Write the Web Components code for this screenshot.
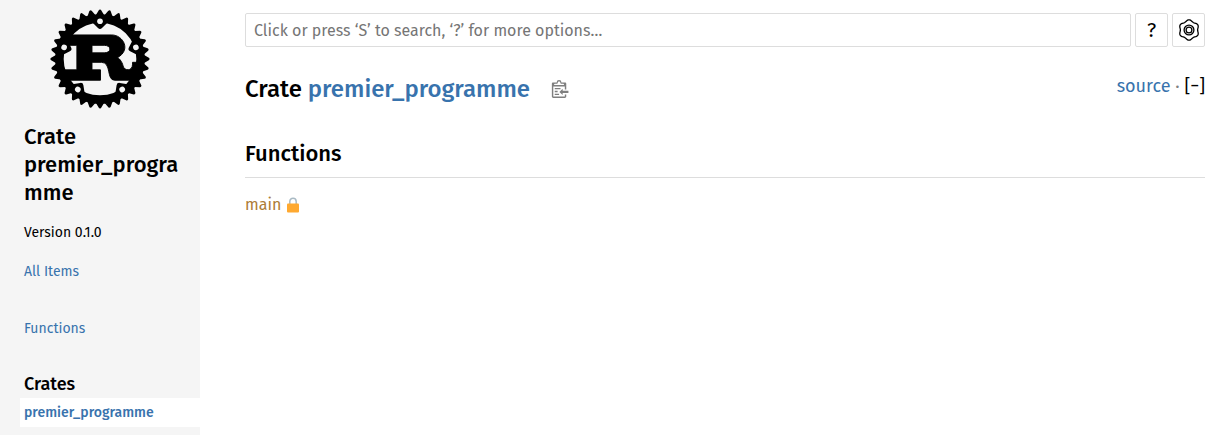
<!DOCTYPE html>
<html lang="en">
<head>
<meta charset="utf-8">
<title>premier_programme - Rust</title>
<style>
html, body { margin: 0; min-height: 100%; }
body { background: #fff; color: #000; font: 16px/24px "Fira Sans", "Noto Sans", sans-serif; --link: #3873ad; --line: #dddddd; }
</style>
</head>
<body>
<doc-page>
  <doc-sidebar slot="sidebar" crate="premier_programme" version="0.1.0"></doc-sidebar>
  <search-bar></search-bar>
  <crate-heading name="premier_programme"></crate-heading>
  <item-section heading="Functions"><item-link href="#main" private>main</item-link></item-section>
</doc-page>
<script>
const define = (name, render) => customElements.define(name, class extends HTMLElement {
  connectedCallback() {
    if (this.shadowRoot) return;
    this.attachShadow({ mode: 'open' }).innerHTML = render(this);
  }
});

define('doc-page', () => `
<style>
:host { display: grid; grid-template-columns: 200px minmax(0, 1fr); min-height: 100vh; }
main { padding: 13px 19px 15px 45px; }
</style>
<slot name="sidebar"></slot>
<main><slot></slot></main>`);

const turned = (markup, count) => Array.from({ length: count }, (_, i) =>
  `<g transform="rotate(${i * 360 / count})">${markup}</g>`).join('');

define('rust-logo', () => `
<style>
:host { display: block; }
svg { display: block; width: 100px; height: 100px; }
</style>
<svg viewBox="0 0 106 106" role="img" aria-label="Rust logo">
  <mask id="holes" maskUnits="userSpaceOnUse" x="-60" y="-60" width="120" height="120">
    <rect x="-60" y="-60" width="120" height="120" fill="white"/>
    ${turned('<circle cy="-40" r="3" fill="black"/>', 5)}
  </mask>
  <g transform="translate(53 53)" stroke="black" stroke-linejoin="round">
    <path transform="translate(.5 .5)" d="M-9-15H4C12-15 12-7 4-7H-9ZM-40 22H0V11H-9V3H1C12 3 6 22 15 22H40V3H34V5C34 13 25 12 24 7C23 2 19-2 18-2C33-10 24-26 12-26H-35V-15H-25V11H-40Z"/>
    <g mask="url(#holes)">
      <circle r="43" fill="none" stroke-width="9"/>
      <g stroke-width="3">${turned('<polygon points="46,3 51,0 46,-3"/>', 32)}</g>
      <g stroke-width="6">${turned('<polygon points="-7,-42 0,-35 7,-42"/>', 5)}</g>
    </g>
  </g>
</svg>`);

define('doc-sidebar', el => `
<style>
:host { display: block; box-sizing: border-box; background: #f5f5f5; padding: 9px 0 8px 24px; font-size: 14px; line-height: 19px; }
rust-logo { padding-left: 26px; }
h2 { margin: 14px 20px 16px 0; font-size: 22px; line-height: 28px; font-weight: 500; overflow-wrap: anywhere; }
ul { list-style: none; margin: 0; padding: 0; }
.version { margin-bottom: 20px; }
.index { margin: 38px 0 36px; }
a { color: var(--link); text-decoration: none; }
h3 { margin: 0 0 4px; font-size: 18px; line-height: 20px; font-weight: 500; }
.current { display: block; margin-left: -4px; padding: 5px 4px; background: #fff; font-weight: 500; }
</style>
<rust-logo></rust-logo>
<h2>Crate ${el.getAttribute('crate')}</h2>
<div class="version">Version ${el.getAttribute('version')}</div>
<a href="#all">All Items</a>
<ul class="index"><li><a href="#functions">Functions</a></li></ul>
<h3>Crates</h3>
<a class="current" href="#crate">${el.getAttribute('crate')}</a>`);

/* Six-lobed wheel outline, as a smooth closed curve. */
const wheel = Array.from({ length: 72 }, (_, i) => {
  const a = i * Math.PI / 36, r = 9.4 + 0.8 * Math.cos(6 * (a - Math.PI / 2));
  return (11 + r * Math.cos(a)).toFixed(2) + ' ' + (11 - r * Math.sin(a)).toFixed(2);
}).join('L');

define('search-bar', () => `
<style>
:host { display: block; }
form { display: grid; grid-template-columns: minmax(0, 1fr) 33px 33px; gap: 4px; height: 34px; }
input, button { box-sizing: border-box; margin: 0; border: 1px solid var(--line); border-radius: 2px; background: #fff; color: #000; font: inherit; }
input { width: 100%; padding: 2px 8px 0; }
input::placeholder { color: #757575; opacity: 1; }
button { display: grid; place-items: center; padding: 0; font-size: 20px; }
svg { display: block; width: 22px; height: 22px; }
</style>
<form role="search">
  <input type="search" aria-label="Search" placeholder="Click or press ‘S’ to search, ‘?’ for more options…">
  <button type="button" title="help">?</button>
  <button type="button" aria-label="Settings">
    <svg viewBox="0 0 22 22" fill="none" stroke="#000" stroke-width="1.3"><path d="M${wheel}Z"/><circle cx="11" cy="11" r="4.9"/><circle cx="11" cy="11" r="2.9"/></svg>
  </button>
</form>`);

define('crate-heading', el => `
<style>
:host { display: flex; justify-content: space-between; align-items: flex-start; margin-top: 24px; }
h1 { display: flex; align-items: center; margin: 0; font-size: 24px; line-height: 36px; font-weight: 500; white-space: pre; }
a { color: var(--link); text-decoration: none; }
button { margin: 0; border: 0; padding: 0; background: none; color: inherit; font: inherit; }
.copy { margin-left: 21px; color: #7f7f7f; }
svg { display: block; width: 19px; height: 18px; }
.tools { font-size: 18px; line-height: 30px; color: #808080; }
.tools button { color: #000; }
</style>
<h1>Crate <a href="#crate">${el.getAttribute('name')}</a><button class="copy" type="button" aria-label="Copy item path"><svg viewBox="0 0 24 25" fill="currentColor"><path d="M18 20h2v3c0 1-1 2-2 2H2c-.998 0-2-1-2-2V5c0-.911.755-1.667 1.667-1.667h5A3.323 3.323 0 0110 0a3.323 3.323 0 013.333 3.333h5C19.245 3.333 20 4.09 20 5v8.333h-2V9H2v14h16v-3zM3 7h14c0-.911-.793-1.667-1.75-1.667H13.5c-.957 0-1.75-.755-1.75-1.666C11.75 2.755 10.957 2 10 2s-1.75.755-1.75 1.667c0 .911-.793 1.666-1.75 1.666H4.75C3.793 5.333 3 6.09 3 7z"/><path d="M4 19h6v2H4zM12 11H4v2h8zM4 17h4v-2H4zM15 15v-3l-4.5 4.5L15 21v-3l8.027-.032L23 15z"/></svg></button></h1>
<div class="tools"><a href="#source">source</a> · <button type="button" title="collapse all docs">[−]</button></div>`);

define('item-section', el => `
<style>
:host { display: block; }
h2 { margin: 33px 0 15px; border-bottom: 1px solid var(--line); padding-bottom: 9px; font-size: 22px; line-height: 28px; font-weight: 500; }
</style>
<h2>${el.getAttribute('heading')}</h2>
<slot></slot>`);

define('item-link', el => `
<style>
:host { display: flex; align-items: center; gap: 6px; }
a { color: #ad7c37; text-decoration: none; }
svg { display: block; width: 12px; height: 16px; }
</style>
<a href="${el.getAttribute('href')}"><slot></slot></a>
${el.hasAttribute('private') ? `<svg viewBox="0 0 12 16" role="img" aria-label="Restricted visibility"><path d="M2.8 8V4.4a3.2 3.2 0 0 1 6.4 0V8" fill="none" stroke="#a9bac4" stroke-width="1.5"/><rect y="6.5" width="12" height="9" rx="1" fill="#ffa930"/></svg>` : ''}`);
</script>
</body>
</html>
